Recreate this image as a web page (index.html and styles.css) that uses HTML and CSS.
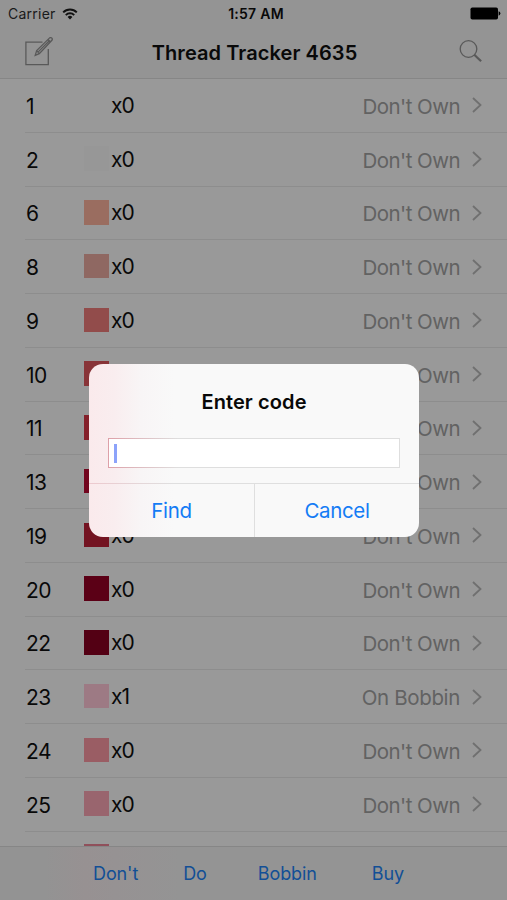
FILE: index.html
```
<!DOCTYPE html>
<html lang="en">
<head>
<meta charset="utf-8">
<title>Thread Tracker</title>
<link rel="stylesheet" href="styles.css">
</head>
<body>
<div class="screen">
  <header class="top">
    <div class="status">
      <div class="carrier"><span>Carrier</span>
        <svg class="wifi" width="16" height="12" viewBox="0 0 16 12"><g fill="none" stroke="#111" stroke-width="2"><path d="M1.2 4.4a9.6 9.6 0 0 1 13.6 0"/><path d="M3.8 7.1a5.9 5.9 0 0 1 8.4 0"/></g><path d="M8 11.4 5.6 9a3.4 3.4 0 0 1 4.8 0z" fill="#111"/></svg>
      </div>
      <span class="time">1:57 AM</span>
      <svg class="battery" width="31" height="13" viewBox="0 0 31 13"><rect x=".5" y=".5" width="27.5" height="12" rx="1.8"/><path d="M28.6 4.3q1.8.6 1.8 2.2t-1.8 2.2z"/></svg>
    </div>
    <div class="nav">
      <svg class="compose" width="30" height="30" viewBox="0 0 30 30" fill="none" stroke="#595959" stroke-width="1.3"><path d="M18.5 5.1H1.9v22.6h22.4V12"/><path d="m11.2 18.4 1.5-4.8L25.6.9q1-.7 2.1.2t.2 2.2L15.3 16.6zM24 2.4l2.6 2.6M12.7 13.6l2.6 3M14 15.1 25.3 3.7"/></svg>
      <h1>Thread Tracker 4635</h1>
      <svg class="search" width="24" height="24" viewBox="0 0 24 24" fill="none" stroke="#595959"><circle cx="9.5" cy="9" r="8.3" stroke-width="1.3"/><path d="m15.3 14.8 6.8 6.5" stroke-width="2.2"/></svg>
    </div>
  </header>
  <main class="list">
    <div class="row"><span class="code">1</span><i class="swatch c1"></i><span class="qty">x0</span><span class="state">Don't Own</span><svg class="chev" viewBox="0 0 10 16"><path d="m1 1 7.5 7L1 15"/></svg></div>
    <div class="row"><span class="code">2</span><i class="swatch c2"></i><span class="qty">x0</span><span class="state">Don't Own</span><svg class="chev" viewBox="0 0 10 16"><path d="m1 1 7.5 7L1 15"/></svg></div>
    <div class="row"><span class="code">6</span><i class="swatch c6"></i><span class="qty">x0</span><span class="state">Don't Own</span><svg class="chev" viewBox="0 0 10 16"><path d="m1 1 7.5 7L1 15"/></svg></div>
    <div class="row"><span class="code">8</span><i class="swatch c8"></i><span class="qty">x0</span><span class="state">Don't Own</span><svg class="chev" viewBox="0 0 10 16"><path d="m1 1 7.5 7L1 15"/></svg></div>
    <div class="row"><span class="code">9</span><i class="swatch c9"></i><span class="qty">x0</span><span class="state">Don't Own</span><svg class="chev" viewBox="0 0 10 16"><path d="m1 1 7.5 7L1 15"/></svg></div>
    <div class="row"><span class="code">10</span><i class="swatch c10"></i><span class="qty">x0</span><span class="state">Don't Own</span><svg class="chev" viewBox="0 0 10 16"><path d="m1 1 7.5 7L1 15"/></svg></div>
    <div class="row"><span class="code">11</span><i class="swatch c11"></i><span class="qty">x0</span><span class="state">Don't Own</span><svg class="chev" viewBox="0 0 10 16"><path d="m1 1 7.5 7L1 15"/></svg></div>
    <div class="row"><span class="code">13</span><i class="swatch c13"></i><span class="qty">x0</span><span class="state">Don't Own</span><svg class="chev" viewBox="0 0 10 16"><path d="m1 1 7.5 7L1 15"/></svg></div>
    <div class="row"><span class="code">19</span><i class="swatch c19"></i><span class="qty">x0</span><span class="state">Don't Own</span><svg class="chev" viewBox="0 0 10 16"><path d="m1 1 7.5 7L1 15"/></svg></div>
    <div class="row"><span class="code">20</span><i class="swatch c20"></i><span class="qty">x0</span><span class="state">Don't Own</span><svg class="chev" viewBox="0 0 10 16"><path d="m1 1 7.5 7L1 15"/></svg></div>
    <div class="row"><span class="code">22</span><i class="swatch c22"></i><span class="qty">x0</span><span class="state">Don't Own</span><svg class="chev" viewBox="0 0 10 16"><path d="m1 1 7.5 7L1 15"/></svg></div>
    <div class="row"><span class="code">23</span><i class="swatch c23"></i><span class="qty">x1</span><span class="state">On Bobbin</span><svg class="chev" viewBox="0 0 10 16"><path d="m1 1 7.5 7L1 15"/></svg></div>
    <div class="row"><span class="code">24</span><i class="swatch c24"></i><span class="qty">x0</span><span class="state">Don't Own</span><svg class="chev" viewBox="0 0 10 16"><path d="m1 1 7.5 7L1 15"/></svg></div>
    <div class="row"><span class="code">25</span><i class="swatch c25"></i><span class="qty">x0</span><span class="state">Don't Own</span><svg class="chev" viewBox="0 0 10 16"><path d="m1 1 7.5 7L1 15"/></svg></div>
    <div class="row"><span class="code"></span><i class="swatch c26"></i></div>
  </main>
  <footer class="toolbar"><a>Don't</a><a>Do</a><a>Bobbin</a><a>Buy</a></footer>
  <div class="dialog">
    <h2>Enter code</h2>
    <div class="field"><i class="caret"></i></div>
    <div class="actions"><a>Find</a><a>Cancel</a></div>
  </div>
</div>
</body>
</html>
```
FILE: styles.css
```
* { box-sizing: border-box; }
body { margin: 0; font-family: Inter, "Liberation Sans", sans-serif; color: #090909; }
h1, h2 { margin: 0; font-weight: 600; }
svg { display: block; flex: none; }
.screen { position: relative; width: 507px; height: 900px; overflow: hidden; display: flex; flex-direction: column; background: #999; }

.top { flex: none; height: 79px; background: #949494; border-bottom: 1px solid #868686; }
.status { display: grid; grid-template-columns: 1fr auto 1fr; align-items: center; height: 27px; padding: 0 6px 0 8px; font-size: 14px; }
.carrier { display: flex; align-items: center; gap: 6px; color: #1a1a1a; letter-spacing: .25px; }
.time { font-weight: 600; font-size: 14px; letter-spacing: .25px; padding-left: 3px; }
.battery { justify-self: end; fill: #000; }
.nav { display: flex; align-items: center; justify-content: space-between; height: 50px; padding: 0 24px; }
.nav h1 { font-size: 20px; letter-spacing: .08px; padding: 1px 4px 0 0; }

.list { flex: none; height: 767px; overflow: hidden; }
.row { display: flex; align-items: center; height: 53.76px; margin-left: 25px; padding-right: 25px; border-bottom: 1px solid #8d8d8d; font-size: 21px; }
.code { width: 59px; padding: 2px 0 0 1px; letter-spacing: -.5px; }
.swatch { width: 24.5px; height: 24.5px; margin-bottom: 1px; }
.qty { margin-left: 2.5px; letter-spacing: -1px; }
.row:nth-child(12) .state { letter-spacing: -.35px; }
.state { margin-left: auto; padding-top: 2px; color: #626262; font-size: 20.5px; letter-spacing: -.55px; }
.chev { width: 10px; height: 16px; margin-left: 12px; fill: none; stroke: #707070; stroke-width: 1.8; }
.c1 { background: #999; }
.c2 { background: #979797; }
.c6 { background: #9a6d60; }
.c8 { background: #8f6862; }
.c9 { background: #924c4b; }
.c10 { background: #883438; }
.c11 { background: #84202a; }
.c13 { background: #72051e; }
.c19 { background: #731321; }
.c20 { background: #5b0016; }
.c22 { background: #530014; }
.c23 { background: #9d7a84; }
.c24 { background: #9a5d64; }
.c25 { background: #99656e; }
.c26 { background: #90505b; margin-bottom: 3px; }

.toolbar { flex: none; display: flex; height: 54px; padding: 16px 0 0 93px; border-top: 1px solid #868686; background: linear-gradient(90deg, #939393 45px, #979192 85px, #969293 115px, #949494 180px); color: #124f96; font-size: 18px; line-height: 22px; letter-spacing: -.1px; }
.toolbar a { margin-right: 45px; }
.toolbar a:nth-child(2) { margin-right: 51px; }
.toolbar a:nth-child(3) { margin-right: 55px; }

.dialog { position: absolute; left: 89px; top: 364px; width: 330px; height: 172.5px; display: flex; flex-direction: column; border-radius: 14px; overflow: hidden; background: linear-gradient(90deg, #faeaec 0, #f9edef 25px, #f8f5f6 52px, #f9f9f9 85px); }
.dialog h2 { height: 74px; line-height: 76px; text-align: center; font-size: 20px; letter-spacing: .1px; color: #080808; }
.field { margin: 0 19px; height: 30px; padding: 5px; background: #fff; border: 1px solid; border-image: linear-gradient(90deg, #dda0a8, #dedede 70px) 1; }
.caret { display: block; width: 3px; height: 19px; background: #8ca3fa; }
.actions { display: grid; grid-template-columns: 1fr 1fr; margin-top: 15px; flex: 1; border-top: 1px solid; border-image: linear-gradient(90deg, #edc9ce, #dfdfdf 85px) 1; color: #147cf5; font-size: 20.5px; line-height: 54px; text-align: center; letter-spacing: -.35px; }
.actions a + a { border-left: 1px solid #dfdfdf; }
```
